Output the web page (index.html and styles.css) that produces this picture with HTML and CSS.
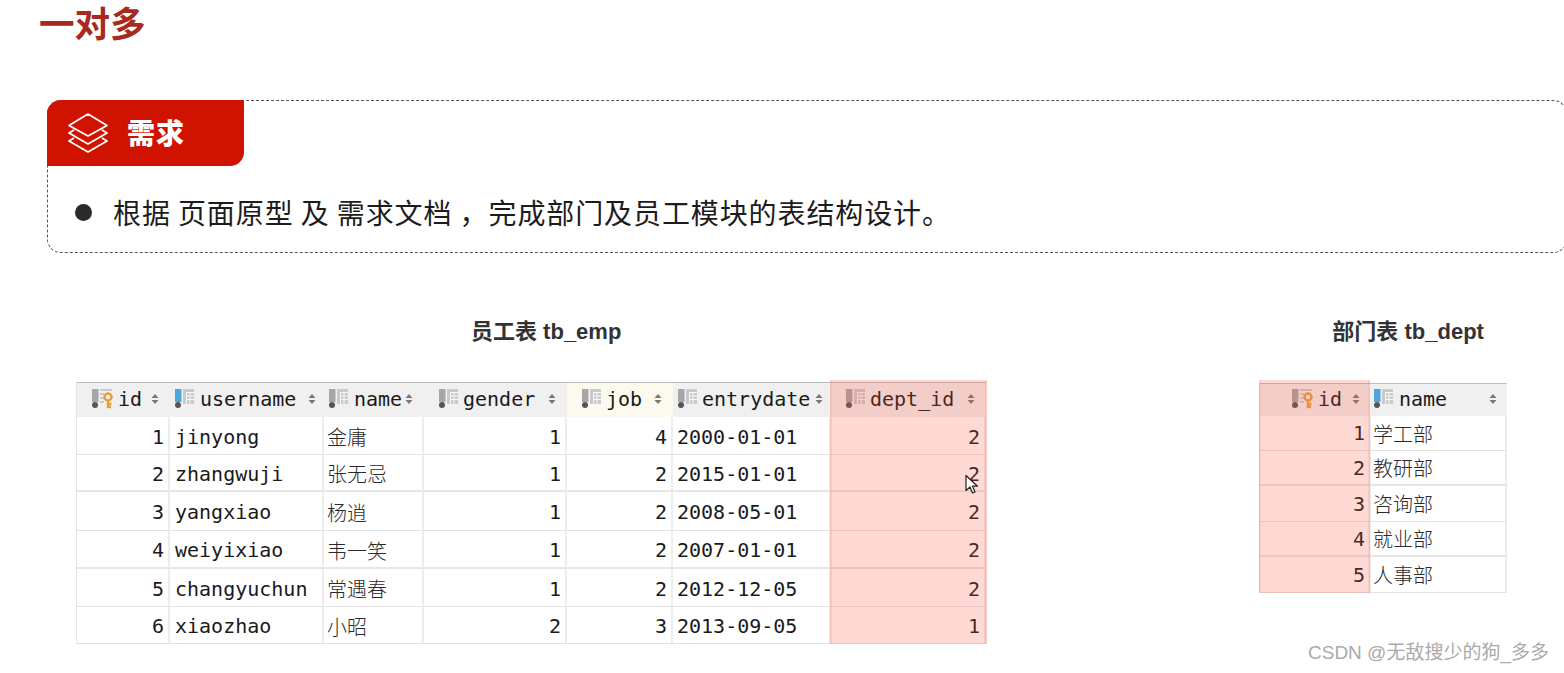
FILE: index.html
```html
<!DOCTYPE html>
<html lang="zh">
<head>
<meta charset="utf-8">
<title>一对多</title>
<link rel="stylesheet" href="styles.css">
</head>
<body>
<svg class="defs" width="0" height="0" aria-hidden="true">
  <symbol id="col" viewBox="0 0 20 20">
    <rect class="bar" x="0" y="0" width="6.500" height="13"/>
    <circle cx="3" cy="16" r="3" fill="#555"/>
    <rect x="8" y="0" width="11" height="15" fill="#c8cacc"/>
    <path d="M11.500 3.500h7.500M11.500 7h7.500M11.500 10.500h7.500M11.500 3.500v11.500M15 3.500v11.500" stroke="#f6f6f6" stroke-width="1" fill="none"/>
  </symbol>
  <symbol id="key" viewBox="0 0 22 20">
    <rect x="0" y="0" width="6.500" height="13" fill="#a6a6a6"/>
    <circle cx="3" cy="16" r="3" fill="#555"/>
    <path d="M8 1h12M8 5h4M8 9h4M8 13h4" stroke="#c8cacc" stroke-width="2" fill="none"/>
    <circle cx="16" cy="8" r="3.500" fill="none" stroke="#e5a03c" stroke-width="2.500"/>
    <path d="M16 11v8M16 15h3.500M16 18h3" stroke="#e5a03c" stroke-width="2.500" fill="none"/>
  </symbol>
  <symbol id="sort" viewBox="0 0 8 12">
    <path d="M4 1l3.500 4h-7zM4 11l3.500-4h-7z" fill="#777"/>
  </symbol>
</svg>

<h1 class="title">一对多</h1>

<section class="callout">
  <div class="tab">
    <svg class="layers" viewBox="0 0 42 42" aria-hidden="true">
      <path d="M21 2L40 13.500L21 24L2 13.500Z M7 18L2 21L21 32L40 21L35 18 M7 26L2 29L21 40L40 29L35 26" fill="none" stroke="#fff" stroke-width="1.700" stroke-linejoin="round"/>
    </svg>
    <span class="tab-text">需求</span>
  </div>
  <div class="item">
    <span class="dot"></span>
    <span class="item-text">根据 页面原型 及 需求文档 ，完成部门及员工模块的表结构设计。</span>
  </div>
</section>

<div class="captions">
  <h2 class="cap cap-emp">员工表 tb_emp</h2>
  <h2 class="cap cap-dept">部门表 tb_dept</h2>
</div>

<div class="tables">
  <div class="wrap">
    <div class="grid emp">
      <div class="th num"><svg class="ic-key"><use href="#key"/></svg><span>id</span><svg class="so"><use href="#sort"/></svg></div>
      <div class="th txt blue"><svg class="ic"><use href="#col"/></svg><span>username</span><svg class="so"><use href="#sort"/></svg></div>
      <div class="th txt tight"><svg class="ic"><use href="#col"/></svg><span>name</span><svg class="so"><use href="#sort"/></svg></div>
      <div class="th num"><svg class="ic"><use href="#col"/></svg><span>gender</span><svg class="so"><use href="#sort"/></svg></div>
      <div class="th num cream"><svg class="ic"><use href="#col"/></svg><span>job</span><svg class="so"><use href="#sort"/></svg></div>
      <div class="th txt"><svg class="ic"><use href="#col"/></svg><span>entrydate</span><svg class="so"><use href="#sort"/></svg></div>
      <div class="th num"><svg class="ic"><use href="#col"/></svg><span>dept_id</span><svg class="so"><use href="#sort"/></svg></div>

      <div class="td r">1</div><div class="td">jinyong</div><div class="td zh">金庸</div><div class="td r">1</div><div class="td r">4</div><div class="td">2000-01-01</div><div class="td r">2</div>
      <div class="td r">2</div><div class="td">zhangwuji</div><div class="td zh">张无忌</div><div class="td r">1</div><div class="td r">2</div><div class="td">2015-01-01</div><div class="td r">2</div>
      <div class="td r">3</div><div class="td">yangxiao</div><div class="td zh">杨逍</div><div class="td r">1</div><div class="td r">2</div><div class="td">2008-05-01</div><div class="td r">2</div>
      <div class="td r">4</div><div class="td">weiyixiao</div><div class="td zh">韦一笑</div><div class="td r">1</div><div class="td r">2</div><div class="td">2007-01-01</div><div class="td r">2</div>
      <div class="td r">5</div><div class="td">changyuchun</div><div class="td zh">常遇春</div><div class="td r">1</div><div class="td r">2</div><div class="td">2012-12-05</div><div class="td r">2</div>
      <div class="td r">6</div><div class="td">xiaozhao</div><div class="td zh">小昭</div><div class="td r">2</div><div class="td r">3</div><div class="td">2013-09-05</div><div class="td r">1</div>
    </div>
    <div class="sel sel-emp"></div>
    <svg class="cursor" viewBox="0 0 14 20" aria-hidden="true"><path d="M1 1v15l4-3.500 2.500 6 2.500-1-2.500-5.800h5z" fill="#fff" stroke="#222" stroke-width="1.200" stroke-linejoin="round"/></svg>
  </div>

  <div class="wrap wrap-dept">
    <div class="grid dept">
      <div class="th num"><svg class="ic-key"><use href="#key"/></svg><span>id</span><svg class="so"><use href="#sort"/></svg></div>
      <div class="th txt blue"><svg class="ic"><use href="#col"/></svg><span>name</span><svg class="so"><use href="#sort"/></svg></div>
      <div class="td r">1</div><div class="td zh">学工部</div>
      <div class="td r">2</div><div class="td zh">教研部</div>
      <div class="td r">3</div><div class="td zh">咨询部</div>
      <div class="td r">4</div><div class="td zh">就业部</div>
      <div class="td r">5</div><div class="td zh">人事部</div>
    </div>
    <div class="sel sel-dept"></div>
  </div>
</div>

<div class="mark">CSDN @无敌搜少的狗_多多</div>
</body>
</html>
```
FILE: styles.css
```css
* { box-sizing: border-box; }
html, body { margin: 0; padding: 0; height: 673px; overflow: hidden; background: #fff; }
body { position: relative; font-family: "Liberation Sans", "Noto Sans CJK SC", sans-serif; color: #222; }
.defs { position: absolute; }

.title {
  margin: 0 0 0 39px;
  height: 100px;
  font-size: 35.500px;
  line-height: 51px;
  font-weight: 700;
  color: #a82a1e;
  font-family: "Liberation Sans", "Noto Sans CJK SC", sans-serif;
}

.callout {
  margin-left: 47px;
  width: 1520px;
  height: 153px;
  border: 1px dashed #555;
  border-radius: 14px;
}
.tab {
  margin: -1px 0 0 -1px;
  width: 197px;
  height: 66px;
  background: #d01200;
  border-radius: 14px 0 14px 0;
  display: flex;
  align-items: center;
  padding: 0 0 3px 20px;
  gap: 18px;
}
.layers { width: 42px; height: 42px; margin-top: 3px; }
.tab-text {
  color: #fff;
  font-size: 28px;
  letter-spacing: 1px;
  line-height: 38px;
  font-weight: 900;
  font-family: "Noto Sans CJK SC", sans-serif;
}
.item {
  display: flex;
  align-items: center;
  height: 93px;
  padding: 0 0 0 27px;
  gap: 21px;
}
.dot { width: 17px; height: 17px; border-radius: 50%; background: #2a2a2a; }
.item-text {
  padding-bottom: 2px;
  font-size: 28px;
  letter-spacing: 0.9px;
  color: #1c1c1c;
  font-family: "Noto Sans CJK SC", sans-serif;
}

.captions { display: flex; height: 129px; padding-top: 64px; }
.cap {
  margin: 0;
  font-size: 22px;
  line-height: 30px;
  font-weight: 700;
  color: #333;
  font-family: "Liberation Sans", "Noto Sans CJK SC", sans-serif;
}
.cap-emp { margin-left: 471px; }
.cap-dept { margin-left: 711px; }

.tables { display: flex; align-items: flex-start; padding-left: 76px; }
.wrap { position: relative; }
.wrap-dept { margin: 1px 0 0 273px; }

.grid {
  display: grid;
  font-family: "DejaVu Sans Mono", "Liberation Mono", monospace;
  font-size: 20px;
  color: #1a1a1a;
  border-left: 1px solid #e4e4e4;
}
.emp {
  width: 910px;
  grid-template-columns: 93px 154px 100px 143px 106px 158px 155px;
  grid-template-rows: 35px 38px 37px 39px 38px 38px 37px;
}
.dept {
  width: 247px;
  grid-template-columns: 111px 136px;
  grid-template-rows: 33px 35px 35px 36px 35px 36px;
}

.th {
  display: flex;
  align-items: center;
  background: #f0f0f0;
  border-top: 1px solid #bfbfbf;
  padding-bottom: 2px;
  padding-right: 8px;
}
.th.num { padding-left: 15px; padding-right: 11px; }
.th.txt { padding-left: 5px; }
.th.tight { padding-right: 11px; }
.th.cream { background: #fcf9ee; }
.th span { margin-left: 4px; }
.th.blue span, .th.tight span { margin-left: 5px; }
.ic { width: 20px; height: 20px; flex: none; }
.ic-key { width: 22px; height: 20px; flex: none; }
.bar { fill: var(--bar, #a6a6a6); }
.blue { --bar: #4ea6e0; }
.so { width: 8px; height: 12px; margin-left: auto; flex: none; }

.dept .th.num { padding-left: 32px; }
.dept .th.txt { padding-left: 3px; padding-right: 10px; }

.td {
  display: flex;
  align-items: center;
  padding: 0 4px;
  border-right: 2px solid #ededed;
  border-bottom: 1px solid #e2e2e2;
  white-space: nowrap;
}
.emp .td { padding-top: 2px; }
.emp .td:nth-child(7n+2) { padding-left: 5px; }
.emp .td:nth-child(n+15):nth-child(-n+21),
.emp .td:nth-child(n+29):nth-child(-n+35),
.dept .td:nth-child(n+5):nth-child(-n+6),
.dept .td:nth-child(n+9):nth-child(-n+10) {
  border-bottom: 2px solid #e6e6e6;
}
.td.r { justify-content: flex-end; }
.td.zh {
  padding-left: 3px;
  font-family: "Noto Sans CJK SC", serif;
  font-weight: 300;
  color: #2a2a2a;
}
.dept .td.zh { padding-left: 2px; }

.sel {
  position: absolute;
  background: rgba(255, 80, 60, .22);
  border-right: 2px solid rgba(235, 110, 100, .12);
  border-left: 2px solid rgba(235, 110, 100, .12);
}
.sel-emp { left: 754px; width: 157px; top: -2px; bottom: 0; }
.sel-dept { left: 0; width: 111px; top: -3px; bottom: 0; }

.cursor { position: absolute; left: 889px; top: 92px; width: 14px; height: 21px; }

.mark {
  position: absolute;
  left: 1308px;
  top: 639px;
  font-size: 19px;
  line-height: 28px;
  color: #aaa;
  font-family: "Liberation Sans", "Noto Sans CJK SC", sans-serif;
  white-space: nowrap;
}
```
